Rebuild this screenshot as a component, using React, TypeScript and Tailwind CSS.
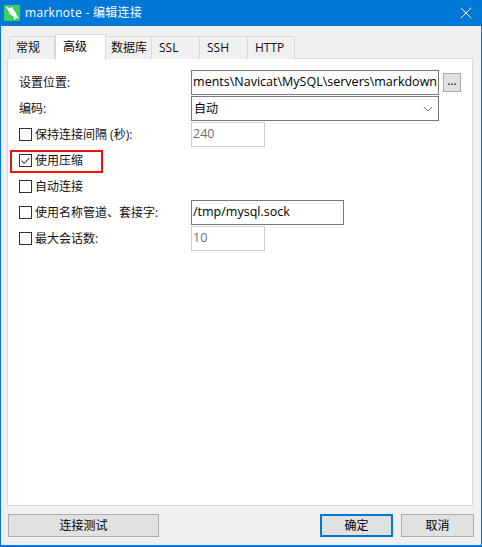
import { ChevronDown, X, Check } from 'lucide-react';

const font = { fontFamily: '"Open Sans", "Noto Sans CJK SC", sans-serif' };

const tabs = [
  { label: '常规', w: 'w-[46px] pl-[6px]' },
  { label: '高级', w: 'w-[51px] pl-[7px]', active: true },
  { label: '数据库', w: 'w-[46px] pl-[5px]' },
  { label: 'SSL', w: 'w-[48px] pl-[7px]' },
  { label: 'SSH', w: 'w-[48px] pl-[7px]' },
  { label: 'HTTP', w: 'w-[47px] pl-[7px]' },
];

function CheckBox({ checked = false }: { checked?: boolean }) {
  return (
    <span className="flex h-[13px] w-[13px] shrink-0 items-center justify-center border border-[#333] bg-white">
      {checked && <Check size={12} strokeWidth={2.4} className="text-[#555]" />}
    </span>
  );
}

function Field({ children, disabled = false, w }: { children: React.ReactNode; disabled?: boolean; w: string }) {
  return (
    <div
      className={`flex h-[25px] items-center overflow-hidden whitespace-nowrap border-[1px] bg-white px-[1px] text-[12.5px] ${w} ${
        disabled ? 'border-[#ccc] text-[#6d6d6d]' : 'border-[#7a7a7a] text-black'
      }`}
    >
      {children}
    </div>
  );
}

function Row({ label, check, checked, children }: { label: string; check?: boolean; checked?: boolean; children?: React.ReactNode }) {
  return (
    <div className="flex h-[25px] items-center">
      <div className="flex w-[172px] items-center gap-[3px] text-xs text-[#111]">
        {check && <CheckBox checked={checked} />}
        <span>{label}</span>
      </div>
      {children}
    </div>
  );
}

export default function App() {
  return (
    <div className="flex h-[547px] w-[482px] flex-col border-x border-b-2 border-[#0078d7] bg-[#f0f0f0]" style={font}>
      {/* 標題列 */}
      <div className="-mx-px flex h-[26px] shrink-0 items-center bg-[#0078d7] pl-[4px] pr-[6px] text-white">
        <svg width="16" height="16" viewBox="0 0 16 16" className="shrink-0">
          <rect width="16" height="16" fill="#3fcf5f" />
          <path d="M1.5 1.5 L5.5 3 L8.5 2 L9 4.5 C11 6 12.5 8.5 13 11 L15 13.5 L12 13 L10.5 15 L9.5 11.5 C7 10.5 5 8.5 4.5 6 Z" fill="#fff" />
        </svg>
        <span className="ml-[5px] flex-1 text-xs tracking-[0.3px]">marknote - 编辑连接</span>
        <X size={20} strokeWidth={1.2} />
      </div>

      <div className="flex flex-1 flex-col px-[6px] pt-[8px]">
        {/* 分頁 */}
        <div className="relative z-10 flex h-[25px] pl-[2px]">
          {tabs.map((tab, i) =>
            tab.active ? (
              <div key={tab.label} className={`-mb-px flex h-[26px] items-start border-x border-t border-[#d9d9d9] bg-white pt-[4px] text-xs text-black ${tab.w}`}>
                {tab.label}
              </div>
            ) : (
              <div key={tab.label} className={`mt-[2px] flex items-center border-r border-t border-[#d9d9d9] bg-[#f0f0f0] text-xs text-[#111] ${i === 0 ? 'border-l' : ''} ${tab.w}`}>
                {tab.label}
              </div>
            ),
          )}
        </div>

        {/* 內容 */}
        <div className="-mt-px flex h-[448px] w-[466px] flex-col gap-px border border-[#d9d9d9] bg-white pl-[11px] pt-[11px]">
          <Row label="设置位置:">
            <Field w="w-[248px]">
              <span className="flex w-full justify-end">ments\Navicat\MySQL\servers\markdown</span>
            </Field>
            <button className="ml-[4px] flex h-[19px] w-[18px] items-center justify-center border border-[#adadad] bg-[#e1e1e1] pb-1 text-xs text-black">...</button>
          </Row>
          <Row label="编码:">
            <Field w="w-[248px]">
              <span className="flex-1 pl-[1px] text-xs">自动</span>
              <ChevronDown size={16} strokeWidth={1} className="mr-[1px] text-[#333]" />
            </Field>
          </Row>
          <Row label="保持连接间隔 (秒):" check>
            <Field w="w-[74px]" disabled>240</Field>
          </Row>
          <div className="relative h-[25px]">
            <Row label="使用压缩" check checked />
            <div className="absolute left-[-9px] top-[2px] h-[23px] w-[93px] border-2 border-[#ee1111]" />
          </div>
          <Row label="自动连接" check />
          <Row label="使用名称管道、套接字:" check>
            <Field w="w-[153px]">/tmp/mysql.sock</Field>
          </Row>
          <Row label="最大会话数:" check>
            <Field w="w-[74px]" disabled>10</Field>
          </Row>
        </div>

        {/* 底部按鈕 */}
        <div className="mt-[8px] flex pl-px">
          <button className="h-[23px] w-[151px] border border-[#adadad] bg-[#e1e1e1] text-xs text-black">连接测试</button>
          <button className="ml-[161px] h-[23px] w-[73px] border-2 border-[#0078d7] bg-[#e1e1e1] text-xs text-black">确定</button>
          <button className="ml-[8px] h-[23px] w-[73px] border border-[#adadad] bg-[#e1e1e1] text-xs text-black">取消</button>
        </div>
      </div>
    </div>
  );
}
